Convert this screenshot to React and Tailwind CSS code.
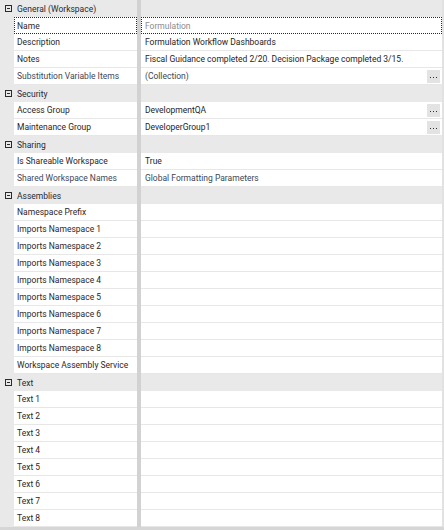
import React from 'react';

const imports = [1, 2, 3, 4, 5, 6, 7, 8].map((n) => ({ name: `Imports Namespace ${n}` }));
const texts = [1, 2, 3, 4, 5, 6, 7, 8].map((n) => ({ name: `Text ${n}` }));

const sections = [
  {
    title: 'General (Workspace)',
    rows: [
      { name: 'Name', value: 'Formulation', selected: true, muted: true },
      { name: 'Description', value: 'Formulation Workflow Dashboards' },
      { name: 'Notes', value: 'Fiscal Guidance completed 2/20. Decision Package completed 3/15.' },
      { name: 'Substitution Variable Items', value: '(Collection)', button: true, soft: true },
    ],
  },
  {
    title: 'Security',
    rows: [
      { name: 'Access Group', value: 'DevelopmentQA', button: true },
      { name: 'Maintenance Group', value: 'DeveloperGroup1', button: true },
    ],
  },
  {
    title: 'Sharing',
    rows: [
      { name: 'Is Shareable Workspace', value: 'True' },
      { name: 'Shared Workspace Names', value: 'Global Formatting Parameters', soft: true },
    ],
  },
  {
    title: 'Assemblies',
    rows: [{ name: 'Namespace Prefix' }, ...imports, { name: 'Workspace Assembly Service' }],
  },
  { title: 'Text', rows: texts },
];

// collapse box drawn at the left of every category
function CollapseBox() {
  return (
    <svg width="7" height="7" viewBox="0 0 7 7" className="block">
      <rect x="0.5" y="0.5" width="6" height="6" fill="none" stroke="#2b2b2b" />
      <line x1="2" y1="3.5" x2="5" y2="3.5" stroke="#2b2b2b" />
    </svg>
  );
}

function EllipsisButton() {
  return (
    <div className="mr-[2px] flex h-[13px] w-[13px] items-end justify-center gap-[2px] bg-[#e3e3e3] pb-[5px]">
      <span className="h-[1px] w-[1px] bg-[#3a2e2a]" />
      <span className="h-[1px] w-[1px] bg-[#3a2e2a]" />
      <span className="h-[1px] w-[1px] bg-[#3a2e2a]" />
    </div>
  );
}

function CategoryRow({ title }) {
  return (
    <div className="flex h-[17px] bg-[#e9e9e9]">
      <div className="flex w-[14px] shrink-0 items-center pl-[5px]">
        <CollapseBox />
      </div>
      <div className="flex w-[123px] shrink-0 items-center pl-[3px] text-[#262a36]">{title}</div>
      <div className="w-[4px] shrink-0 bg-[#d2d2d2]" />
      <div className="flex-1" />
    </div>
  );
}

function PropertyRow({ row }) {
  const cell = row.selected
    ? 'border border-dotted border-[#2a2a2a]'
    : 'border-b border-[#e7e7e7]';
  return (
    <div className="flex h-[17px]">
      <div className="w-[14px] shrink-0 bg-[#e9e9e9]" />
      <div
        className={`flex w-[123px] shrink-0 items-center overflow-hidden whitespace-nowrap bg-white ${
          row.selected ? 'pl-[2px]' : 'pl-[3px]'
        } ${cell} ${row.soft ? 'text-[#3e4656]' : 'text-[#2e2626]'}`}
      >
        {row.name}
      </div>
      <div className="w-[4px] shrink-0 bg-[#d2d2d2]" />
      <div
        className={`flex flex-1 items-center justify-between overflow-hidden whitespace-nowrap bg-white ${
          row.selected ? 'pl-[3px]' : 'pl-[4px]'
        } ${cell} ${row.muted ? 'text-[#8c8c8c]' : row.soft ? 'text-[#3c4654]' : 'text-[#1e1e26]'}`}
      >
        <span>{row.value}</span>
        {row.button && <EllipsisButton />}
      </div>
    </div>
  );
}

export default function App() {
  return (
    <div
      className="h-[530px] w-[444px] overflow-hidden bg-[#e9e9e9] text-[8.5px] leading-[16px]"
      style={{ fontFamily: 'Roboto, "Liberation Sans", sans-serif' }}
    >
      <div className="flex">
        <div className="w-[442px]">
          {sections.map((section) => (
            <div key={section.title}>
              <CategoryRow title={section.title} />
              {section.rows.map((row) => (
                <PropertyRow key={row.name} row={row} />
              ))}
            </div>
          ))}
        </div>
        <div className="w-[2px] bg-[#e2e2e2]" />
      </div>
      <div className="h-[3px] bg-[#d6d6d6]" />
    </div>
  );
}
